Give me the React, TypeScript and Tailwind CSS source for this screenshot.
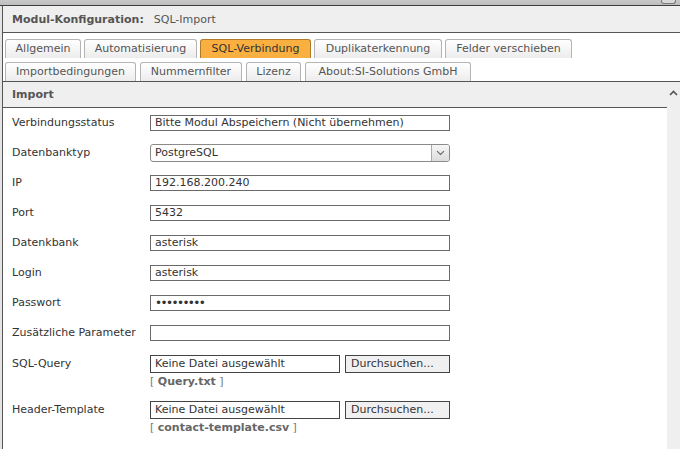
const tabsRow1 = [
  { label: "Allgemein", w: "w-[76px]" },
  { label: "Automatisierung", w: "w-[113px]" },
  { label: "SQL-Verbindung", w: "w-[111px]", active: true },
  { label: "Duplikaterkennung", w: "w-[128px]" },
  { label: "Felder verschieben", w: "w-[127px]" },
];

const tabsRow2 = [
  { label: "Importbedingungen", w: "w-[131px]" },
  { label: "Nummernfilter", w: "w-[102px]" },
  { label: "Lizenz", w: "w-[55px]" },
  { label: "About:SI-Solutions GmbH", w: "w-[166px]" },
];

const textRows = [
  { label: "Verbindungsstatus", value: "Bitte Modul Abspeichern (Nicht übernehmen)" },
  { label: "Datenbanktyp", value: "PostgreSQL", select: true },
  { label: "IP", value: "192.168.200.240" },
  { label: "Port", value: "5432" },
  { label: "Datenkbank", value: "asterisk" },
  { label: "Login", value: "asterisk" },
  { label: "Passwort", value: "•••••••••", password: true },
  { label: "Zusätzliche Parameter", value: "" },
];

const fileRows = [
  { label: "SQL-Query", file: "Query.txt" },
  { label: "Header-Template", file: "contact-template.csv" },
];

type Tab = { label: string; w: string; active?: boolean };

const TabButton = ({ tab }: { tab: Tab }) => (
  <div
    className={
      tab.active
        ? `${tab.w} h-[19px] flex items-center justify-center rounded-t-[3px] border border-b-0 border-[#b07a2a] bg-[#f9b040] text-[#333]`
        : `${tab.w} h-[19px] flex items-center justify-center rounded-t-[3px] border border-b-0 border-[#b4b4b4] bg-gradient-to-b from-white to-[#ececec] text-[#555]`
    }
  >
    {tab.label}
  </div>
);

const App = () => {
  return (
    <div className="w-[680px] h-[449px] overflow-hidden bg-[#e4e4e4] flex flex-col text-[11px] font-['DejaVu_Sans','Liberation_Sans',sans-serif]">
      <div className="h-[6px] shrink-0 bg-gradient-to-b from-[#c9c9c9] to-[#bdbdbd] border-b border-[#3f3f3f] flex">
        <div className="ml-auto mr-[4px] w-[15px] h-[4px] rounded-b-[3px] border border-t-0 border-[#7a7a7a] bg-[#d8d8d8]" />
      </div>
      <div className="flex flex-1 min-h-0 pl-[2px]">
        <div className="flex-1 flex flex-col border-l border-[#555] bg-white">
          <div className="h-[27px] shrink-0 bg-[#efefef] border-b border-[#555] flex items-center pl-[9px] pt-[2px] gap-[10px]">
            <span className="font-bold text-[#555]">Modul-Konfiguration:</span>
            <span className="text-[#555]">SQL-Import</span>
          </div>

          <div className="pt-[6px] pl-[2px] flex flex-col gap-[4px]">
            <div className="flex gap-[3px]">
              {tabsRow1.map((t) => (
                <TabButton key={t.label} tab={t} />
              ))}
            </div>
            <div className="flex gap-[4px]">
              {tabsRow2.map((t) => (
                <TabButton key={t.label} tab={t} />
              ))}
            </div>
          </div>

          <div className="flex flex-1 min-h-0 border-t border-[#555]">
            <div className="flex-1 flex flex-col">
              <div className="h-[26px] shrink-0 bg-[#efefef] border-b border-[#555] flex items-center pl-[9px] pt-[1px]">
                <span className="font-bold text-[#555]">Import</span>
              </div>

              <div className="flex flex-col pl-[9px] text-[#333]">
                {textRows.map((r) => (
                  <div key={r.label} className="h-[30px] flex items-center">
                    <div className="w-[138px] pt-[1px]">{r.label}</div>
                    {r.select ? (
                      <div className="w-[300px] h-[18px] flex items-center rounded-[3px] border border-[#8a8a8a] bg-white">
                        <span className="flex-1 pl-[4px]">{r.value}</span>
                        <div className="w-[18px] h-full flex items-center justify-center border-l border-[#aaa] rounded-r-[2px] bg-gradient-to-b from-[#f6f6f6] to-[#dcdcdc]">
                          <svg width="9" height="6" viewBox="0 0 9 6" fill="none">
                            <path d="M1 1.2l3.5 3.3L8 1.2" stroke="#666" strokeWidth="1.1" />
                          </svg>
                        </div>
                      </div>
                    ) : (
                      <div className="w-[300px] h-[16px] flex items-center border border-[#6a6a6a] bg-white pl-[4px]">
                        {r.password ? (
                          <span className="text-[12px] leading-[14px] tracking-[-1.6px] text-[#333]">{r.value}</span>
                        ) : (
                          <span>{r.value}</span>
                        )}
                      </div>
                    )}
                  </div>
                ))}

                {fileRows.map((r) => (
                  <div key={r.label} className="h-[46px] pt-[7px] flex">
                    <div className="w-[138px] h-[18px] flex items-center">{r.label}</div>
                    <div className="flex flex-col">
                      <div className="flex gap-[5px]">
                        <div className="w-[190px] h-[18px] flex items-center border border-[#444] pl-[4px]">
                          Keine Datei ausgewählt
                        </div>
                        <div className="w-[105px] h-[18px] flex items-center border border-[#444] bg-[#f0f0f0] pl-[5px]">
                          Durchsuchen...
                        </div>
                      </div>
                      <div className="mt-[2px] leading-[14px] text-[#666]">
                        <span className="text-[#777]">[ </span>
                        <span className="font-bold">{r.file}</span>
                        <span className="text-[#777]"> ]</span>
                      </div>
                    </div>
                  </div>
                ))}
              </div>
            </div>

            <div className="w-[13px] shrink-0 bg-[#efefef] flex justify-center pt-[8px]">
              <svg width="9" height="6" viewBox="0 0 9 6" fill="none">
                <path d="M1 5L4.5 1.5 8 5" stroke="#555" strokeWidth="1.6" />
              </svg>
            </div>
          </div>
        </div>
      </div>
    </div>
  );
};

export default App;
